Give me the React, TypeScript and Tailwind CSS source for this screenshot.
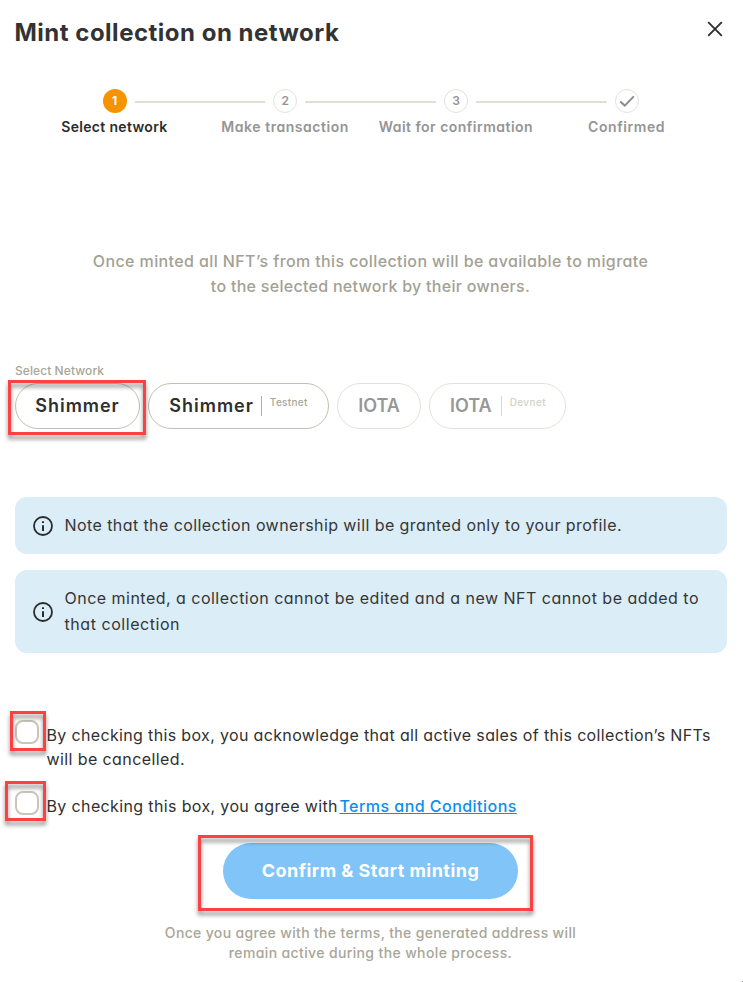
import type { ReactNode } from "react";

function InfoIcon() {
  return (
    <svg viewBox="0 0 20 20" className="size-5 shrink-0" fill="none">
      <circle cx="10" cy="10" r="9" stroke="#2b2b2b" strokeWidth="1.8" />
      <path d="M10 9.2V15" stroke="#2b2b2b" strokeWidth="2" />
      <path d="M10 5.2V7" stroke="#2b2b2b" strokeWidth="2" />
    </svg>
  );
}

function Connector() {
  return <span className="mx-2 mt-0.5 h-0.5 flex-1 bg-[#e2dfd0]" />;
}

function StepDot({ children, active = false }: { children: ReactNode; active?: boolean }) {
  return (
    <span
      className={
        active
          ? "flex size-6 items-center justify-center rounded-full bg-[#f59300] text-xs font-bold text-white"
          : "flex size-6 items-center justify-center rounded-full border border-[#e4e2db] text-xs font-semibold text-[#959595]"
      }
    >
      {children}
    </span>
  );
}

/** Red annotation frame that lies over the control it points out. */
function Marker({ className }: { className: string }) {
  return (
    <span
      aria-hidden="true"
      className={`pointer-events-none absolute z-10 border-[3px] border-[#fb4141] drop-shadow-[0_4px_2px_rgba(0,0,0,0.45)] ${className}`}
    />
  );
}

function Steps() {
  return (
    <section>
      <div className="mr-[104.2px] ml-[102.6px] flex items-center">
        <StepDot active>1</StepDot>
        <Connector />
        <StepDot>2</StepDot>
        <Connector />
        <StepDot>3</StepDot>
        <Connector />
        <StepDot>
          <svg viewBox="0 0 24 24" className="size-6 shrink-0" fill="none" stroke="#8d8d8d" strokeWidth="2">
            <path d="M5.2 12.4 9.8 16.6 18.8 7.4" />
          </svg>
        </StepDot>
      </div>
      <div className="mr-[31px] ml-[29px] mt-1 grid grid-cols-4 text-center text-sm leading-5 font-semibold whitespace-nowrap text-[#959595]">
        <span className="tracking-[0.322px] text-[#2b2b2b]">Select network</span>
        <span className="tracking-[0.541px]">Make transaction</span>
        <span className="tracking-[0.484px]">Wait for confirmation</span>
        <span className="tracking-[0.572px]">Confirmed</span>
      </div>
    </section>
  );
}

function Networks() {
  const pill = "flex h-[46px] shrink-0 justify-center rounded-full border pt-[11px] text-lg leading-[22px] font-semibold";
  return (
    <section className="mt-[62px] ml-[15px]">
      <h2 className="text-xs leading-5 font-medium tracking-[0.075px] text-[#a8a698]">Select Network</h2>
      <div className="mt-0.5 flex">
        <div className="relative mr-2">
          <button className={`${pill} w-[125px] border-[#c2c0b2] text-[#2f2f2f]`}>
            <span className="tracking-[0.974px]">Shimmer</span>
          </button>
          <Marker className="-top-[3px] -left-[7px] h-[55px] w-[138px]" />
        </div>
        <button className={`${pill} mr-2 w-[181px] border-[#c2c0b2] text-[#2f2f2f]`}>
          <span className="tracking-[0.974px]">Shimmer</span>
          <span className="mt-[1px] mr-2 ml-[7px] h-5 w-px shrink-0 bg-[#5cd0c4]" />
          <span className="-mt-1 text-[10px] font-medium tracking-[0.3px] text-[#a8a698]">Testnet</span>
        </button>
        <button className={`${pill} mr-2 w-[84px] border-[#e3e2da] text-[#979797]`}>
          <span>IOTA</span>
        </button>
        <button className={`${pill} w-[137px] border-[#e3e2da] pl-px text-[#979797]`}>
          <span>IOTA</span>
          <span className="mt-[1px] mr-2 ml-[9px] h-5 w-px shrink-0 bg-[#aee8e1]" />
          <span className="-mt-1 text-[10px] font-medium tracking-[0.4px] text-[#d2d1ca]">Devnet</span>
        </button>
      </div>
    </section>
  );
}

function Notice({ className, children }: { className: string; children: ReactNode }) {
  return (
    <div className={`flex items-center gap-[11.5px] rounded-xl bg-[#dbedf7] px-[18px] ${className}`}>
      <InfoIcon />
      <p className="pb-0.5 leading-[26px] whitespace-nowrap text-[#363636]">{children}</p>
    </div>
  );
}

function Checkbox({ marker }: { marker: string }) {
  return (
    <span className="relative size-6 shrink-0 rounded-lg border-2 border-[#c9c6b9] bg-white">
      <Marker className={marker} />
    </span>
  );
}

export default function App() {
  return (
    <main className="relative h-[982px] w-[743px] overflow-hidden bg-white font-['Inter','Open_Sans',sans-serif] [font-feature-settings:'cv11']">
      <header className="flex justify-between pt-[17px] pr-5 pl-[14.5px]">
        <h1 className="text-2xl leading-8 font-bold tracking-[0.5px] whitespace-nowrap text-[#333333]">
          Mint collection on network
        </h1>
        <button aria-label="Close" className="flex size-4 justify-center pt-1">
          <svg viewBox="0 0 16 16" className="size-4 shrink-0" fill="none" stroke="#2f2f2f" strokeWidth="1.9">
            <path d="M1.2 1.2 14.8 14.8M14.8 1.2 1.2 14.8" />
          </svg>
        </button>
      </header>

      <div className="mt-10">
        <Steps />
      </div>

      <p className="mt-28 pr-0.5 text-center leading-[25px] font-medium whitespace-nowrap text-[#a3a195]">
        <span className="tracking-[0.389px]">
          Once minted all NFT’s from this collection will be available to migrate
        </span>
        <br />
        <span className="tracking-[0.284px]">to the selected network by their owners.</span>
      </p>

      <Networks />

      <section className="mt-[68px] mr-4 ml-[15px] flex flex-col gap-4">
        <Notice className="h-[57px]">
          <span className="tracking-[0.419px]">
            Note that the collection ownership will be granted only to your profile.
          </span>
        </Notice>
        <Notice className="h-[83px]">
          <span className="tracking-[0.48px]">
            Once minted, a collection cannot be edited and a new NFT cannot be added to
          </span>
          <br />
          <span className="tracking-[0.547px]">that collection</span>
        </Notice>
      </section>

      <section className="mt-[67px] ml-[15px] text-[#303030]">
        <label className="flex gap-[7.5px]">
          <Checkbox marker="-top-[11px] -left-[7px] h-10 w-9" />
          <span className="pt-[3px] leading-6 whitespace-nowrap">
            <span className="tracking-[0.347px]">
              By checking this box, you acknowledge that all active sales of this collection’s NFTs
            </span>
            <br />
            <span className="tracking-[0.401px]">will be cancelled.</span>
          </span>
        </label>
        <label className="mt-5 flex gap-[7.5px]">
          <Checkbox marker="-top-3 -left-3 h-10 w-[41px]" />
          <span className="pt-[3px] leading-6 whitespace-nowrap">
            <span className="tracking-[0.364px]">By checking this box, you agree with</span>
            <a className="ml-[1.5px] font-medium tracking-[0.47px] text-[#0c8eea] underline">Terms and Conditions</a>
          </span>
        </label>
      </section>

      <div className="relative mt-[25px] ml-[223px] w-[295px]">
        <button className="h-14 w-full rounded-full bg-[#80c4f8] text-lg font-bold tracking-[0.459px] text-white">
          Confirm &amp; Start minting
        </button>
        <Marker className="-top-2 -left-[25px] h-[76px] w-[335px]" />
      </div>

      <p className="mt-6 pr-0.5 text-center text-sm leading-5 font-medium whitespace-nowrap text-[#a8a698]">
        <span className="tracking-[0.343px]">Once you agree with the terms, the generated address will</span>
        <br />
        <span className="tracking-[0.37px]">remain active during the whole process.</span>
      </p>
      <i className="absolute right-0 bottom-0 size-px bg-[#9a9a9a]" />
    </main>
  );
}
